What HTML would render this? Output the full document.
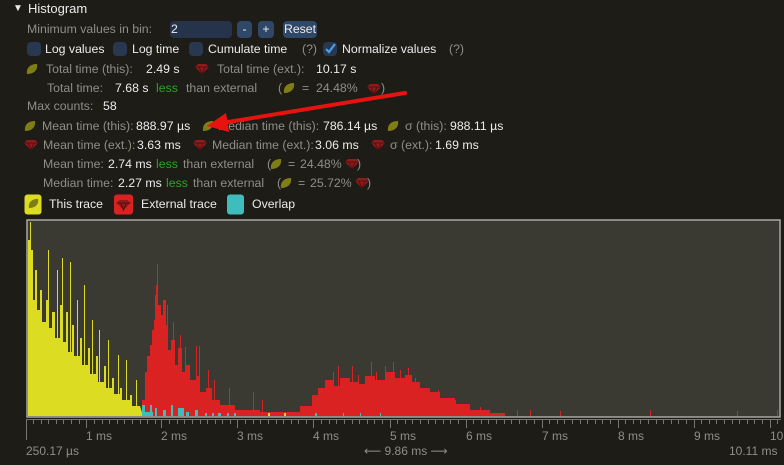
<!DOCTYPE html>
<html><head><meta charset="utf-8"><style>
body{margin:0;width:784px;height:465px;background:#1d1c17;overflow:hidden;position:relative;font-family:"Liberation Sans","DejaVu Sans",sans-serif;font-size:12.3px;color:#e6e6e6}
.t{position:absolute;white-space:nowrap;line-height:16px;top:0}
.g{color:#8f8f88}.w{color:#ececec}.l{color:#2aa52a}
.cb{position:absolute;width:14px;height:14px;background:#283851;border-radius:4px}
.btn{position:absolute;height:17px;background:#2f4868;border-radius:4px;color:#eee;text-align:center;line-height:17px}
svg{position:absolute;left:0;top:0}
</style></head><body>
<svg width="784" height="465">
<defs>
<symbol id="leaf" viewBox="0 0 12 12"><path d="M1 11 C0 5 4 1 11 1 C12 7 8 11 1 11Z" fill="#7e7d16"/></symbol>
<symbol id="gem" viewBox="0 0 14 12"><path d="M3 1 H11 L14 4 L7 11 L0 4Z" fill="#8e1c1c"/><path d="M0 4 H14 M4 4 L7 11 L10 4" stroke="#5a0c0c" stroke-width="1" fill="none"/></symbol>
</defs>
<rect x="27" y="220" width="753" height="197" fill="#3a3932" stroke="#a9a9a3" stroke-width="1.5"/>
<polygon fill="#dcdc22" points="28,416 28,240 30,240 30,222 31,222 31,250 33,250 33,300 35,300 35,270 37,270 37,310 40,310 40,290 42,290 42,322 46,322 46,300 48,300 48,328 52,328 52,312 55,312 55,338 60,338 60,305 62,305 62,342 66,342 66,312 68,312 68,352 72,352 72,325 74,325 74,356 80,356 80,338 82,338 82,365 88,365 88,348 90,348 90,374 96,374 96,356 98,356 98,382 104,382 104,366 106,366 106,388 112,388 112,378 114,378 114,394 120,394 120,388 122,388 122,400 130,400 130,395 132,395 132,406 140,406 143,416"/>
<g stroke="#dcdc22" stroke-width="1"><path d="M48.5 416V250 M57.5 416V270 M62.5 416V258 M70.5 416V262 M77.5 416V300 M84.5 416V285 M92.5 416V320 M99.5 416V330 M108.5 416V340 M118.5 416V355 M126.5 416V360 M136.5 416V380"/></g>
<polygon fill="#db2222" points="142,416 142,400 145,400 145,372 147,372 147,356 150,356 150,345 152,345 152,330 154,330 154,320 156,320 156,285 158,285 158,305 161,305 161,315 164,315 164,300 166,300 166,325 168,325 168,350 171,350 171,340 175,340 175,365 178,365 178,348 182,348 182,372 186,372 186,365 190,365 190,380 196,380 196,376 200,376 200,392 206,392 206,388 212,388 212,400 220,400 220,405 235,405 235,410 260,410 260,412 300,412 300,406 312,406 312,395 318,395 318,388 325,388 325,380 333,380 333,386 340,386 340,378 350,378 350,382 358,382 358,384 365,384 365,376 375,376 375,380 385,380 385,372 395,372 395,378 405,378 405,375 412,375 412,382 420,382 420,388 430,388 430,392 440,392 440,398 455,398 455,404 470,404 470,410 490,410 490,413 505,413 505,416"/>
<g stroke="#db2222" stroke-width="1"><path d="M157.5 416V264 M155.5 416V295 M163.5 416V300 M167.5 416V305 M173.5 416V322 M180.5 416V335 M185.5 416V347 M196.5 416V346 M199.5 416V346 M208.5 416V370 M214.5 416V380 M229.5 416V388 M253.5 416V392 M262.5 416V400 M325.5 416V390 M333.5 416V372 M338.5 416V366 M352.5 416V366 M358.5 416V375 M371.5 416V362 M376.5 416V372 M385.5 416V366 M393.5 416V362 M400.5 416V370 M408.5 416V368 M415.5 416V378 M438.5 416V390 M455.5 416V400 M480.5 416V407 M517.5 416V410 M530.5 416V410 M560.5 416V411 M650.5 416V410 M737.5 416V411 M777.5 416V410"/></g>
<g fill="#3fbcbc"><rect x="142" y="405" width="3" height="11"/><rect x="145" y="412" width="8" height="4"/><rect x="150" y="405" width="2" height="11"/><rect x="155" y="408" width="2" height="8"/><rect x="163" y="410" width="3" height="6"/><rect x="171" y="405" width="2" height="11"/><rect x="178" y="408" width="6" height="8"/><rect x="186" y="412" width="3" height="4"/><rect x="195" y="410" width="3" height="6"/><rect x="205" y="413" width="2" height="3"/><rect x="212" y="413" width="2" height="3"/><rect x="218" y="413" width="3" height="3"/><rect x="227" y="413" width="2" height="3"/><rect x="234" y="413" width="2" height="3"/><rect x="315" y="413" width="2" height="3"/><rect x="343" y="413" width="1" height="3"/><rect x="360" y="413" width="1" height="3"/><rect x="380" y="413" width="1" height="3"/></g>
<rect x="268" y="413" width="2" height="3" fill="#dcdc22"/><rect x="284" y="413" width="2" height="3" fill="#dcdc22"/>
<line x1="26" y1="419.5" x2="781" y2="419.5" stroke="#77776f"/>
<line x1="26.5" y1="419" x2="26.5" y2="440" stroke="#77776f"/>
<path stroke="#77776f" d="M33.5 419v5M41.5 419v5M48.5 419v5M56.5 419v5M63.5 419v5M71.5 419v5M79.5 419v5M86.5 419v9M94.5 419v5M102.5 419v5M109.5 419v5M117.5 419v5M124.5 419v5M132.5 419v5M140.5 419v5M147.5 419v5M155.5 419v5M161.5 419v9M169.5 419v5M177.5 419v5M184.5 419v5M192.5 419v5M200.5 419v5M207.5 419v5M215.5 419v5M222.5 419v5M230.5 419v5M237.5 419v9M245.5 419v5M253.5 419v5M260.5 419v5M268.5 419v5M276.5 419v5M283.5 419v5M291.5 419v5M298.5 419v5M306.5 419v5M313.5 419v9M321.5 419v5M329.5 419v5M336.5 419v5M344.5 419v5M352.5 419v5M359.5 419v5M367.5 419v5M374.5 419v5M382.5 419v5M390.5 419v9M397.5 419v5M405.5 419v5M412.5 419v5M420.5 419v5M428.5 419v5M435.5 419v5M443.5 419v5M450.5 419v5M458.5 419v5M466.5 419v9M473.5 419v5M481.5 419v5M488.5 419v5M496.5 419v5M504.5 419v5M511.5 419v5M519.5 419v5M526.5 419v5M534.5 419v5M542.5 419v9M549.5 419v5M557.5 419v5M564.5 419v5M572.5 419v5M580.5 419v5M587.5 419v5M595.5 419v5M602.5 419v5M610.5 419v5M618.5 419v9M625.5 419v5M633.5 419v5M640.5 419v5M648.5 419v5M656.5 419v5M663.5 419v5M671.5 419v5M678.5 419v5M686.5 419v5M694.5 419v9M701.5 419v5M709.5 419v5M716.5 419v5M724.5 419v5M732.5 419v5M739.5 419v5M747.5 419v5M754.5 419v5M762.5 419v5M770.5 419v9M777.5 419v5"/>
<rect x="24.5" y="194.5" width="17" height="20" rx="3" fill="#dcdc22"/><use href="#leaf" x="28" y="198" width="11" height="11"/>
<rect x="114" y="194.5" width="19" height="20" rx="3" fill="#db2222"/><use href="#gem" x="116" y="199" width="15" height="12"/>
<rect x="227" y="194.5" width="17" height="20" rx="3" fill="#3fbcbc"/>
<use href="#leaf" x="26" y="63" width="12" height="12"/><use href="#gem" x="195" y="63" width="14" height="12"/>
<use href="#leaf" x="283" y="82" width="12" height="12"/><use href="#gem" x="367" y="83" width="14" height="12"/>
<use href="#leaf" x="24" y="120" width="12" height="12"/><use href="#leaf" x="202" y="120" width="12" height="12"/><use href="#leaf" x="387" y="120" width="12" height="12"/>
<use href="#gem" x="24" y="139" width="14" height="12"/><use href="#gem" x="193" y="139" width="14" height="12"/><use href="#gem" x="371" y="139" width="14" height="12"/>
<use href="#leaf" x="270" y="158" width="12" height="12"/><use href="#gem" x="345" y="158" width="14" height="12"/>
<use href="#leaf" x="280" y="177" width="12" height="12"/><use href="#gem" x="355" y="177" width="14" height="12"/>
</svg>
<div class="t w" style="left:13px;top:1px;font-size:10px">▼</div>
<div class="t w" style="left:28px;top:1px;font-size:13px">Histogram</div>
<div class="t g" style="left:27px;top:21px">Minimum values in bin:</div>
<div style="position:absolute;left:170px;top:21px;width:62px;height:17px;background:#25344a;border-radius:4px"></div>
<div class="t w" style="left:171px;top:21px">2</div>
<div class="btn" style="left:237px;top:21px;width:15px">-</div>
<div class="btn" style="left:258px;top:21px;width:16px">+</div>
<div class="btn" style="left:283px;top:21px;width:34px">Reset</div>
<div class="cb" style="left:27px;top:42px"></div><div class="t w" style="left:45px;top:41px">Log values</div>
<div class="cb" style="left:113px;top:42px"></div><div class="t w" style="left:132px;top:41px">Log time</div>
<div class="cb" style="left:189px;top:42px"></div><div class="t w" style="left:208px;top:41px">Cumulate time</div>
<div class="t g" style="left:302px;top:41px">(?)</div>
<div class="cb" style="left:323px;top:42px"><svg width="14" height="14"><path d="M3 7 L6 10 L12 2" stroke="#4a9ee8" stroke-width="2.2" fill="none"/></svg></div><div class="t w" style="left:342px;top:41px">Normalize values</div>
<div class="t g" style="left:449px;top:41px">(?)</div>
<div class="t g" style="left:46px;top:61px">Total time (this):</div><div class="t w" style="left:146px;top:61px">2.49 s</div>
<div class="t g" style="left:217px;top:61px">Total time (ext.):</div><div class="t w" style="left:316px;top:61px">10.17 s</div>
<div class="t g" style="left:47px;top:80px">Total time:</div><div class="t w" style="left:115px;top:80px">7.68 s</div><div class="t l" style="left:156px;top:80px">less</div><div class="t g" style="left:186px;top:80px">than external</div>
<div class="t g" style="left:278px;top:80px">(</div><div class="t g" style="left:302px;top:80px">=</div><div class="t g" style="left:316px;top:80px">24.48%</div><div class="t g" style="left:381px;top:80px">)</div>
<div class="t g" style="left:27px;top:98px">Max counts:</div><div class="t w" style="left:103px;top:98px">58</div>
<div class="t g" style="left:42px;top:118px">Mean time (this):</div><div class="t w" style="left:136px;top:118px">888.97 µs</div>
<div class="t g" style="left:218px;top:118px">Median time (this):</div><div class="t w" style="left:323px;top:118px">786.14 µs</div>
<div class="t g" style="left:405px;top:118px">σ (this):</div><div class="t w" style="left:450px;top:118px">988.11 µs</div>
<div class="t g" style="left:43px;top:137px">Mean time (ext.):</div><div class="t w" style="left:137px;top:137px">3.63 ms</div>
<div class="t g" style="left:212px;top:137px">Median time (ext.):</div><div class="t w" style="left:315px;top:137px">3.06 ms</div>
<div class="t g" style="left:390px;top:137px">σ (ext.):</div><div class="t w" style="left:435px;top:137px">1.69 ms</div>
<div class="t g" style="left:43px;top:156px">Mean time:</div><div class="t w" style="left:108px;top:156px">2.74 ms</div><div class="t l" style="left:156px;top:156px">less</div><div class="t g" style="left:183px;top:156px">than external</div>
<div class="t g" style="left:267px;top:156px">(</div><div class="t g" style="left:288px;top:156px">=</div><div class="t g" style="left:300px;top:156px">24.48%</div><div class="t g" style="left:357px;top:156px">)</div>
<div class="t g" style="left:43px;top:175px">Median time:</div><div class="t w" style="left:118px;top:175px">2.27 ms</div><div class="t l" style="left:166px;top:175px">less</div><div class="t g" style="left:193px;top:175px">than external</div>
<div class="t g" style="left:277px;top:175px">(</div><div class="t g" style="left:298px;top:175px">=</div><div class="t g" style="left:310px;top:175px">25.72%</div><div class="t g" style="left:367px;top:175px">)</div>
<div class="t w" style="left:49px;top:196px">This trace</div>
<div class="t w" style="left:141px;top:196px">External trace</div>
<div class="t w" style="left:252px;top:196px">Overlap</div>
<svg width="784" height="465" style="pointer-events:none">
<line x1="405" y1="93" x2="222" y2="123" stroke="#e8120e" stroke-width="4" stroke-linecap="round"/>
<polygon points="207,126 226,113 229,132" fill="#e8120e"/>
</svg>
<div class="t g" style="left:86px;top:428px;font-size:12px">1 ms</div><div class="t g" style="left:161px;top:428px;font-size:12px">2 ms</div><div class="t g" style="left:237px;top:428px;font-size:12px">3 ms</div><div class="t g" style="left:313px;top:428px;font-size:12px">4 ms</div><div class="t g" style="left:390px;top:428px;font-size:12px">5 ms</div><div class="t g" style="left:466px;top:428px;font-size:12px">6 ms</div><div class="t g" style="left:542px;top:428px;font-size:12px">7 ms</div><div class="t g" style="left:618px;top:428px;font-size:12px">8 ms</div><div class="t g" style="left:694px;top:428px;font-size:12px">9 ms</div><div class="t g" style="left:770px;top:428px;font-size:12px">10</div>
<div class="t g" style="left:26px;top:443px;font-size:12px">250.17 µs</div>
<div class="t g" style="left:364px;top:443px;font-size:12px">⟵ 9.86 ms ⟶</div>
<div class="t g" style="left:729px;top:443px;font-size:12px">10.11 ms</div>
</body></html>
